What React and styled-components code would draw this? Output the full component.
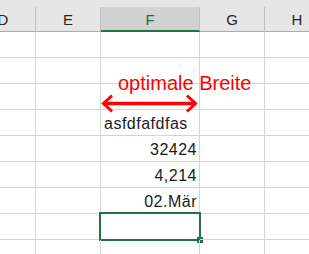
import styled, { createGlobalStyle } from 'styled-components';

const GlobalStyle = createGlobalStyle`
  body {
    margin: 0;
    overflow: hidden;
    background: #ffffff;
    font-family: 'Liberation Sans', Arial, sans-serif;
  }
`;

const columns = [
  { name: 'D' },
  { name: 'E' },
  { name: 'F', selected: true },
  { name: 'G' },
  { name: 'H' },
];

// cell content per row, only column F has values
const rows = [
  {},
  {},
  {},
  { F: { text: 'asfdfafdfas', align: 'left' } },
  { F: { text: '32424', align: 'right' } },
  { F: { text: '4,214', align: 'right' } },
  { F: { text: '02.Mär', align: 'right' } },
  { F: { active: true } },
  {},
];

export default function App() {
  return (
    <Page>
      <GlobalStyle />
      <TopStrip />
      <Sheet>
        {columns.map((col) => (
          <HeaderCell key={col.name} selected={col.selected}>
            {col.name}
          </HeaderCell>
        ))}
        {rows.map((row, r) =>
          columns.map((col) => {
            const cell = row[col.name] || {};
            return (
              <Cell key={r + col.name} align={cell.align}>
                {cell.text}
                {cell.active && (
                  <Selection>
                    <FillHandle />
                  </Selection>
                )}
              </Cell>
            );
          })
        )}
      </Sheet>
      <Annotation>optimale Breite</Annotation>
      <Arrow viewBox="96 92 108 24" width="108" height="24">
        <path d="M103 103.5 H196" stroke="#ff0000" strokeWidth="3.5" fill="none" />
        <path
          d="M112 95.5 L103.5 103.5 L112 111.5 M187 95.5 L195.5 103.5 L187 111.5"
          stroke="#ff0000"
          strokeWidth="3"
          fill="none"
        />
      </Arrow>
    </Page>
  );
}

const Page = styled.div`
  position: relative;
  width: 309px;
  height: 254px;
  overflow: hidden;
`;
const TopStrip = styled.div`
  height: 7px;
  background: #e6e6e6;
`;
const Sheet = styled.div`
  display: grid;
  grid-template-columns: 65px 65px 99px 65px 65px;
  grid-template-rows: 25px;
  grid-auto-rows: 26px;
  margin-left: -29px;
  width: 359px;
`;
const HeaderCell = styled.div`
  box-sizing: border-box;
  padding-top: 1px;
  display: flex;
  align-items: center;
  justify-content: center;
  font-size: 15px;
  background: ${(p) => (p.selected ? '#d2d2d2' : '#e6e6e6')};
  color: ${(p) => (p.selected ? '#1d6b40' : '#262626')};
  border-right: 1px solid #bdbdbd;
  border-bottom: ${(p) => (p.selected ? '2px solid #217346' : '1px solid #ababab')};
`;
const Cell = styled.div`
  position: relative;
  box-sizing: border-box;
  display: flex;
  align-items: flex-end;
  justify-content: ${(p) => (p.align === 'right' ? 'flex-end' : 'flex-start')};
  padding: 0 2px 3px 3px;
  font-size: 16px;
  line-height: 17px;
  letter-spacing: 0.5px;
  color: #1a1a1a;
  white-space: nowrap;
  border-right: 1px solid #d4d4d4;
  border-bottom: 1px solid #d4d4d4;
`;
const Selection = styled.div`
  position: absolute;
  top: -2px;
  left: -2px;
  right: -2px;
  bottom: -2px;
  border: 2px solid #217346;
`;
const FillHandle = styled.div`
  position: absolute;
  right: -4px;
  bottom: -4px;
  width: 6px;
  height: 6px;
  background: #217346;
`;
const Annotation = styled.span`
  position: absolute;
  left: 118px;
  top: 73px;
  font-size: 20px;
  line-height: 20px;
  color: #ff0000;
  white-space: nowrap;
`;
const Arrow = styled.svg`
  position: absolute;
  left: 96px;
  top: 92px;
`;
